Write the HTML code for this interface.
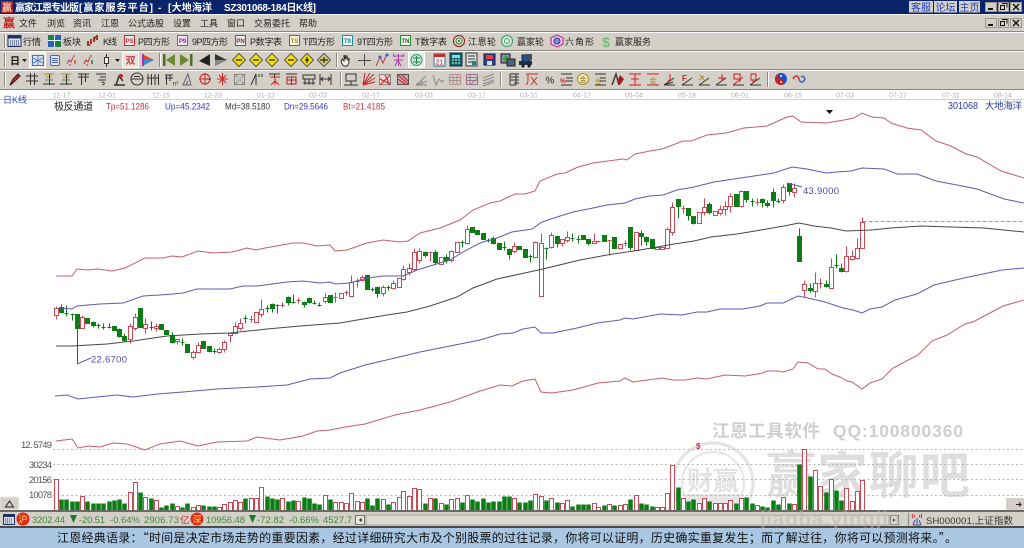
<!DOCTYPE html>
<html lang="zh"><head><meta charset="utf-8"><title>赢家江恩专业版</title>
<style>
html,body{margin:0;padding:0;background:#fff;overflow:hidden}
svg{display:block;filter:blur(.35px)}
text{font-family:"Liberation Sans","Noto Sans CJK SC",sans-serif}
.cn{font-family:"Liberation Sans","Noto Sans CJK SC",sans-serif;font-size:9px;fill:#222}
.d{font-size:7px;fill:#b0b0b0}
.q{font-size:9.5px;fill:#3c8c3c}
.i{font-size:9.5px}
.ln{fill:none;stroke-width:1}
.s{fill:none;stroke:#333;stroke-width:1}
.r{fill:none;stroke:#c22;stroke-width:1}
.y{fill:none;stroke:#a89020;stroke-width:1}
.g{fill:none;stroke:#888;stroke-width:1}
</style></head><body>
<svg xmlns="http://www.w3.org/2000/svg" width="1024" height="548" viewBox="0 0 1024 548">
<rect width="1024" height="548" fill="#fff"/>
<!-- title bar -->
<rect width="1024" height="14" fill="#0a246a"/>
<rect x="1" y="1" width="12" height="12" fill="#b02020"/>
<text x="2" y="11" font-size="10" fill="#f0d0c0" font-weight="bold">赢</text>
<g font-size="10" fill="#fff" font-weight="bold">
<text x="15" y="11" textLength="64">赢家江恩专业版</text>
<text x="79" y="11" textLength="74">[赢家服务平台]</text>
<text x="158" y="11">-</text>
<text x="168" y="11" textLength="44">[大地海洋</text>
<text x="224" y="11" textLength="92">SZ301068-184日K线]</text>
</g>
<g font-size="10" fill="#2040c0" text-anchor="middle">
<rect x="909" y="1" width="24" height="11.5" fill="#d4d0c8"/><text x="921" y="11">客服</text>
<rect x="934" y="1" width="23" height="11.5" fill="#d4d0c8"/><text x="945.5" y="11">论坛</text>
<rect x="959" y="1" width="21" height="11.5" fill="#d4d0c8"/><text x="969.5" y="11">主页</text>
</g>
<g id="wb">
<rect x="985.5" y="2.5" width="11" height="9" fill="#d4d0c8" stroke="#9a988f"/><rect x="988" y="8" width="5" height="2" fill="#111"/>
<rect x="998.5" y="2.5" width="10" height="9" fill="#d4d0c8" stroke="#9a988f"/><path d="M1002 3.5h5v4M1000.5 5.5h4v4h-4z" fill="none" stroke="#111"/>
<rect x="1010.5" y="2.5" width="11" height="9" fill="#d4d0c8" stroke="#9a988f"/><path d="M1013 4l6 6M1019 4l-6 6" stroke="#111" stroke-width="1.4"/>
</g>
<!-- bars -->
<rect y="14" width="1024" height="76" fill="#d4d0c8"/>
<path d="M0 14.5H1024" stroke="#f0eee8"/>
<g stroke="#8a8880"><path d="M0 31.5H1024M0 50.5H1024M0 69.5H1024M0 89.5H1024"/></g>
<g stroke="#fafafa"><path d="M0 32.5H1024M0 51.5H1024M0 70.5H1024"/></g>
<g stroke="#8a8880" fill="none"><path d="M4.5 34V48M4.5 53V67M4.5 72V87M159.5 53V67M336.5 53V67M340.5 72V87M500.5 72V87M767.5 72V87"/></g>
<g stroke="#fff"><path d="M5.5 34V48M5.5 53V67M5.5 72V87M160.5 53V67M337.5 53V67M341.5 72V87M501.5 72V87M768.5 72V87"/></g>
<use href="#wb" y="16"/>
<!-- menu -->
<text x="3" y="27" font-size="12" font-weight="bold" fill="#c01818">赢</text>
<g class="cn">
<text class="cn" x="19" y="26.5" textLength="18">文件</text>
<text class="cn" x="47" y="26.5" textLength="18">浏览</text>
<text class="cn" x="73" y="26.5" textLength="18">资讯</text>
<text class="cn" x="101" y="26.5" textLength="18">江恩</text>
<text class="cn" x="128" y="26.5" textLength="36">公式选股</text>
<text class="cn" x="173" y="26.5" textLength="18">设置</text>
<text class="cn" x="200" y="26.5" textLength="18">工具</text>
<text class="cn" x="227" y="26.5" textLength="18">窗口</text>
<text class="cn" x="254" y="26.5" textLength="36">交易委托</text>
<text class="cn" x="299" y="26.5" textLength="18">帮助</text>
<!-- row1 -->
<text class="cn" x="23" y="45" textLength="18">行情</text>
<text class="cn" x="63" y="45" textLength="18">板块</text>
<text class="cn" x="103" y="45" textLength="14">K线</text>
<text class="cn" x="138" y="45" textLength="32">P四方形</text>
<text class="cn" x="192" y="45" textLength="36">9P四方形</text>
<text class="cn" x="250" y="45" textLength="32">P数字表</text>
<text class="cn" x="303" y="45" textLength="32">T四方形</text>
<text class="cn" x="357" y="45" textLength="36">9T四方形</text>
<text class="cn" x="415" y="45" textLength="32">T数字表</text>
<text class="cn" x="468" y="45" textLength="28">江恩轮</text>
<text class="cn" x="517" y="45" textLength="27">赢家轮</text>
<text class="cn" x="565" y="45" textLength="29">六角形</text>
<text class="cn" x="615" y="45" textLength="36">赢家服务</text>
</g>
<!-- row1 icons -->
<rect x="8" y="35.5" width="13" height="11" fill="#d8e0f0" stroke="#203060"/><rect x="8" y="35.5" width="13" height="3" fill="#203060"/>
<path d="M10 41h10M10 43h10M10 45h10" stroke="#203060" stroke-dasharray="1 1"/>
<rect x="48" y="35" width="6" height="5" fill="#208040"/><rect x="55" y="35" width="6" height="5" fill="#3060b0"/><rect x="48" y="41" width="6" height="6" fill="#3060b0"/><rect x="55" y="41" width="6" height="6" fill="#208040"/><path d="M54.5 35V47M48 40.5H61" stroke="#dff"/>
<path d="M88 41v5M91 39v5M94 37v5M97 35v5" stroke="#c22" stroke-width="2"/><path d="M89.5 44v2M95.500 36v3" stroke="#282" stroke-width="1.500"/>
<g font-size="6" font-weight="bold" text-anchor="middle">
<rect x="124.500" y="35.500" width="10" height="10" fill="#eee" stroke="#c03030"/><text x="129.500" y="43" fill="#c03030">PS</text>
<rect x="177.500" y="35.500" width="10" height="10" fill="#f4e8f8" stroke="#c030c0"/><text x="182.500" y="43" fill="#a020a0">P9</text>
<rect x="235.500" y="35.500" width="10" height="10" fill="#eee" stroke="#c03030"/><text x="240.500" y="43" fill="#803040">PN</text>
<rect x="289.500" y="35.500" width="10" height="10" fill="#eef8e8" stroke="#209030"/><text x="294.500" y="43" fill="#c08020">TS</text>
<rect x="342.500" y="35.500" width="10" height="10" fill="#e8f8f8" stroke="#209090"/><text x="347.500" y="43" fill="#2080a0">T9</text>
<rect x="400.500" y="35.500" width="10" height="10" fill="#eef8e8" stroke="#209030"/><text x="405.500" y="43" fill="#405030">TN</text>
</g>
<circle cx="459" cy="41" r="5.500" fill="#d8e8d0" stroke="#a02820" stroke-width="1.200"/><circle cx="459" cy="41" r="3" fill="none" stroke="#208040"/><circle cx="459" cy="41" r="1" fill="#a02820"/>
<circle cx="507" cy="41" r="5.500" fill="#dff0e0" stroke="#40a070" stroke-width="1.200"/><circle cx="507" cy="41" r="2.500" fill="none" stroke="#40a070"/>
<polygon points="557,35 563,38 563,44 557,47 551,44 551,38" fill="#e8d0f0" stroke="#c03080" stroke-width="1.200"/><circle cx="557" cy="41" r="3" fill="#8090d0" stroke="#303090"/>
<text x="606" y="47" font-size="14" font-weight="bold" fill="#70c070" text-anchor="middle">$</text>
<!-- row2 -->
<text x="10" y="64.500" font-size="10" font-weight="bold" fill="#111">日</text>
<path d="M22 59l2.500 3 2.500-3z" fill="#222"/>
<rect x="29.500" y="52.500" width="16" height="15" fill="#e8e6e0" stroke="#fff"/>
<rect x="32.500" y="55.500" width="11" height="10" fill="#dce4f4" stroke="#5070c0"/><path d="M33 58l10 5M33 63l10-5M38 55v10" stroke="#6080c8" fill="none"/>
<rect x="50.500" y="55.500" width="9" height="10" rx="1.500" fill="#e4e8f8" stroke="#4860c0"/><path d="M52 58.500h6M52 60.500h6M52 62.500h6" stroke="#4860c0"/>
<path d="M67 64l2-4 2 2 2-5M70 64v2M74 57v-2" fill="none" stroke="#c03070"/><path d="M75 60v4" stroke="#c06020" stroke-width="1.500"/>
<path d="M84 64l2-4 2 2 2-5M87 64v2M91 57v-2" fill="none" stroke="#b03030"/><path d="M92 60v4" stroke="#208040" stroke-width="1.500"/>
<rect x="104.500" y="57.500" width="4" height="6" fill="#fff" stroke="#333"/><path d="M106.500 54v3M106.500 64v3" stroke="#333"/>
<path d="M115 59l2.500 3 2.500-3z" fill="#222"/>
<rect x="122.500" y="52.500" width="16" height="15" fill="#e6e4de" stroke="#fff"/>
<text x="130.500" y="64" font-size="10" fill="#d04040" font-weight="bold" text-anchor="middle">双</text>
<polygon points="142,54 154,60 142,66" fill="#e84040"/><polygon points="142,60 154,60 142,66" fill="#3090d0"/><rect x="142" y="54" width="2" height="12" fill="#b030b0"/>
<rect x="163" y="54" width="2.500" height="12" fill="#506a20"/><polygon points="175,54 175,66 166,60" fill="#6a8a30"/>
<polygon points="180,54 180,66 189,60" fill="#6a8a30"/><rect x="190" y="54" width="2.500" height="12" fill="#506a20"/>
<polygon points="210,54 210,66 199,61" fill="#222"/><polygon points="215,54 215,66 227,60" fill="#333"/><polygon points="215,60 215,66 227,60" fill="#888"/>
<g fill="#f4e000" stroke="#555">
<polygon points="239,53.500 245.500,60 239,66.500 232.500,60"/><polygon points="256,53.500 262.500,60 256,66.500 249.500,60"/><polygon points="272,53.500 278.500,60 272,66.500 265.500,60"/><polygon points="291,53.500 297.500,60 291,66.500 284.500,60"/><polygon points="307,53.500 313.500,60 307,66.500 300.500,60"/><polygon points="324,53.500 330.500,60 324,66.500 317.500,60" fill="#d8d070"/>
</g>
<path d="M236 60h6M253 60h6M269 60h6M288 60h6M305 60h4M320 60h8M307 57v6M324 57v6" stroke="#222" stroke-width="1.200"/>
<path d="M344 66c-3-2-3-6-2-7l2 2v-6l1 4v-4l1 4 1-3 1 4 1-2v4c0 2-1 3-2 4z" fill="#f4f2ea" stroke="#333"/>
<path d="M364.500 54v12M358 60.500h13" stroke="#444"/>
<path d="M376 66l4-9 3 6 4-9" fill="none" stroke="#c03040"/><circle cx="380" cy="57" r="1.500" fill="#3060d0"/><circle cx="387" cy="55" r="1.500" fill="#3060d0"/>
<path d="M393 56h11M398.500 54v12M394 60h9M395 66l3-6 3 6M393 54l2 3M404 54l-2 3" fill="none" stroke="#b040b0"/>
<rect x="408.500" y="52.500" width="16" height="15" fill="#e0ece8" stroke="#fff"/><circle cx="416.500" cy="60" r="5.500" fill="#c8e4d0" stroke="#30a070"/><path d="M413 58h7M413 62h7M416.500 56v8" stroke="#208050"/>
<rect x="434" y="54" width="11" height="12" fill="#f0f0f0" stroke="#3070a0"/><rect x="434" y="54" width="11" height="3" fill="#c03030"/><text x="439.500" y="64.500" font-size="7" fill="#b03030" text-anchor="middle">21</text>
<rect x="450" y="53" width="12" height="13" fill="#106070" stroke="#103040"/><rect x="452" y="55" width="8" height="3" fill="#80e0d0"/><path d="M452 60h2M455 60h2M458 60h2M452 63h2M455 63h2M458 63h2" stroke="#cfc"/>
<rect x="466" y="53" width="11" height="13" fill="#e0e0d8" stroke="#303840"/><path d="M468 56h7M468 59h7M468 62h4" stroke="#303840"/><rect x="472" y="61" width="4" height="4" fill="#208080"/>
<rect x="484" y="54" width="11" height="11" fill="#2040a0" stroke="#102040"/><rect x="486" y="55" width="7" height="4" fill="#e84040"/><rect x="487" y="61" width="5" height="4" fill="#ddd"/>
<rect x="501" y="54" width="9" height="9" fill="#70a0a0" stroke="#303"/><circle cx="506" cy="59" r="3" fill="#40a040"/><rect x="507" y="59" width="8" height="7" fill="#506080" stroke="#222"/>
<rect x="522" y="55" width="8" height="9" fill="#2050a0" stroke="#123"/><rect x="525" y="54" width="7" height="6" fill="#405060"/><rect x="519" y="61" width="13" height="4" fill="#203040"/><circle cx="523" cy="66" r="1.500" fill="#111"/><circle cx="529" cy="66" r="1.500" fill="#111"/>
<!-- row3 -->
<path d="M10 85l3-6 5-5 2 2-5 5z" fill="#c22" stroke="#222"/><path d="M10 85l3-2" stroke="#222"/>
<path class="s" d="M26 76h12M26 81h12M30.500 73v12M34.500 73v12"/>
<path class="y" d="M44 74h10M46 77h6"/><path class="s" d="M43 84h12M49.500 74v11"/><path d="M45 80h8" stroke="#3a8a3a"/>
<path class="y" d="M61 74h10M63 77h6"/><path class="s" d="M60 84h12M66.500 74v11"/><path d="M62 80h8" stroke="#3a8a3a"/>
<path class="s" d="M78 74h11M78 77h11M81.500 74v11M85.500 74v8"/>
<path class="s" d="M96 74h10M100 77h6M98 80h8M101.500 82c3 0 4 2 1 3"/>
<path d="M114 85h11M116 85l3-9 4 5" fill="none" stroke="#333" stroke-width="1.500"/><circle cx="121" cy="76" r="2" fill="#c22"/>
<circle cx="137" cy="79" r="6" class="s"/><path class="s" d="M131 79h12M134 76.500h6"/>
<path class="s" d="M148 74v11M151.500 74v11M155 74v11M158.500 74v11M147 78h12"/>
<path class="s" d="M165 75h8M165 78h8M166.500 75v10M170 75v6"/><text x="173" y="85.500" font-size="6" fill="#333">n²</text>
<path d="M183 85l5-11 3 11zM186 85l2-4" fill="none" stroke="#667"/>
<circle cx="205" cy="79" r="5" class="r"/><path class="r" d="M199 79h12M205 73v12"/><path class="s" d="M207 79h4"/>
<path class="r" d="M217 79h11M222.500 73v12M219 75l7 8M226 75l-7 8"/>
<rect x="234.500" y="74.500" width="10" height="10" fill="none" stroke="#888"/><path class="g" d="M234 74l11 11M245 74l-11 11"/><rect x="237" y="77" width="5" height="5" fill="#bbb"/>
<path class="s" d="M251 85l5-11v11M259 74v3M262 74v3"/>
<path class="s" d="M269 74h11M274.500 74v4"/><path class="r" d="M270 77h10M275 78v7M271 85l4-4 4 4"/>
<path class="s" d="M286 74h11"/><path d="M287 77h9v7h-9zM287 80h9M291.500 77v8" fill="none" stroke="#b02020"/>
<path class="s" d="M303 75h12v4h-12zM305 79v6M309 79v6M313 79v6M303 83h12"/>
<path class="s" d="M320 74v11M331 74v11M320 79h11M323 77l-2 2 2 2M328 77l2 2-2 2"/>
<path class="s" d="M346 74h10v7h-10zM351 81v4M344 85h14"/>
<path class="r" d="M363 85l11-11M363 85l12-7M363 85l12-3M363 85l7-12M363 85l2-12"/>
<rect x="379.500" y="74.500" width="11" height="10" fill="#e8d8d0" stroke="#888"/><path class="r" d="M380 85l10-10M380 79l10 5M385 75l5 10"/>
<rect x="397.500" y="74.500" width="11" height="10" fill="#c8a8b0" stroke="#555"/><path class="r" d="M398 75l10 9M398 79l8 6M402 75l6 6"/>
<path class="g" d="M416 85h11M416 85l10-9M416 85l11-4"/><path d="M421 85l1-4" stroke="#888"/>
<path class="g" d="M433 75l3 10 3-6 3 3 2-2"/>
<rect x="449.500" y="74.500" width="11" height="10" fill="none" stroke="#c09090"/><path d="M449 77.500h12M449 80.500h12M453 74v11M457 74v11" stroke="#a09090"/>
<rect x="466.500" y="74.500" width="11" height="10" fill="none" stroke="#a07090"/><path d="M466 77.500h12M466 80.500h12M470 74v11" stroke="#a07090"/><path class="g" d="M471 84l7-6"/>
<path class="g" d="M483 78l11-4M483 81l11-4M483 84l11-4M483 86l11-4"/>
<path class="s" d="M510 74v11M510 74h6M510 77h6M510 80h6M510 85h6"/>
<path class="s" d="M519 74h-5M519 77h-5M519 80h-5M519 83h-5M516 74v11"/>
<path d="M526 74h12M528 74v6c0 2-1 4-2 5M531 77l6 8M537 77l-6 8" fill="none" stroke="#c23030"/>
<text x="550" y="83.500" font-size="10" fill="#555" font-weight="bold" text-anchor="middle">%</text>
<path class="s" d="M561 74h11M561 85h11M566 78h7M566 81h7"/><text x="560" y="83" font-size="6.500" fill="#c22" font-weight="bold">%</text>
<circle cx="583" cy="79" r="5.500" fill="#f0e8c0" stroke="#a89020"/><text x="583" y="82" font-size="7" fill="#907020" text-anchor="middle">金</text>
<path class="s" d="M595 74h11M595 85h11M600 78h6M600 81h6"/><text x="595" y="83.500" font-size="6.500" fill="#a89020">金</text>
<path d="M612 85l4-11 3 11" fill="none" stroke="#333" stroke-width="1.400"/><path d="M620 75l4 4-4 6-3-3z" fill="#a02020"/>
<path class="r" d="M629 85h12M629 74h12M631 79h8M635 74v11"/>
<path class="r" d="M647 85h12M647 74h12"/><text x="653" y="83.500" font-size="7.500" fill="#a89020" text-anchor="middle">金</text>
<path class="s" d="M664 85h11M664 85l10-7M664 85l9-3"/><path class="r" d="M670 74v6l-2 1"/>
<path class="s" d="M682 85h11M682 85l10-7"/><text x="682" y="81" font-size="8" fill="#c22" font-weight="bold">F</text>
<path class="s" d="M699 85h11M699 85l10-7"/><path class="y" d="M700 75l5 6M699 80l5-4"/>
<path class="s" d="M716 85h11M716 85l10-7"/><path class="r" d="M722 74v7M718 78h7"/>
<path class="s" d="M733 85h11"/><path class="r" d="M733 85l10-8M734 74h6v5h-6zM740 82v-4"/>
<path class="s" d="M750 85h11M750 85l10-7"/><path class="r" d="M751 74h5v6h-5zM753 80v3"/>
<circle cx="781" cy="79" r="6" fill="#2050c0"/><path d="M781 73a6 6 0 0 0 0 12a3 3 0 0 0 0-6a3 3 0 0 1 0-6z" fill="#d02020"/><circle cx="781" cy="76" r="1" fill="#fff"/><circle cx="781" cy="82" r="1" fill="#fff"/>
<path d="M793 79c2-4 5-4 6 0" fill="none" stroke="#d03030" stroke-width="1.600"/><path d="M799 79c1 4 4 4 6 0c-1-3-3-3-4-2" fill="none" stroke="#4070c0" stroke-width="1.600"/>
<!-- x axis -->
<rect y="90" width="1024" height="9" fill="#fff"/>
<path d="M0 99.500H1024" stroke="#d0d0d0"/>
<g class="d">
<text class="d" x="53" y="97.500">11-17</text><text class="d" x="98" y="97.500">12-01</text><text class="d" x="152" y="97.500">12-15</text><text class="d" x="204" y="97.500">12-29</text><text class="d" x="257" y="97.500">01-13</text><text class="d" x="309" y="97.500">02-03</text><text class="d" x="362" y="97.500">02-17</text><text class="d" x="415" y="97.500">03-03</text><text class="d" x="468" y="97.500">03-17</text><text class="d" x="520" y="97.500">03-31</text><text class="d" x="573" y="97.500">04-17</text><text class="d" x="625" y="97.500">05-04</text><text class="d" x="678" y="97.500">05-18</text><text class="d" x="731" y="97.500">06-01</text><text class="d" x="784" y="97.500">06-15</text><text class="d" x="836" y="97.500">07-03</text><text class="d" x="889" y="97.500">07-17</text><text class="d" x="942" y="97.500">07-31</text><text class="d" x="994" y="97.500">08-14</text>
</g>
<text x="3" y="103" font-size="9" fill="#3050b8" textLength="24">日K线</text>
<text x="54" y="110" font-size="10" fill="#222" textLength="39">极反通道</text>
<text class="i" x="106" y="109.500" fill="#d03040" textLength="43" lengthAdjust="spacingAndGlyphs">Tp=51.1286</text>
<text class="i" x="165" y="109.500" fill="#3838c0" textLength="45" lengthAdjust="spacingAndGlyphs">Up=45.2342</text>
<text class="i" x="225" y="109.500" fill="#333" textLength="45" lengthAdjust="spacingAndGlyphs">Md=38.5180</text>
<text class="i" x="284" y="109.500" fill="#3838c0" textLength="44" lengthAdjust="spacingAndGlyphs">Dn=29.5646</text>
<text class="i" x="343" y="109.500" fill="#d03040" textLength="42" lengthAdjust="spacingAndGlyphs">Bt=21.4185</text>
<text x="948" y="109" font-size="10" fill="#2a3a9a" textLength="30" lengthAdjust="spacingAndGlyphs">301068</text>
<text x="985" y="109" font-size="9.500" fill="#2a3a9a" textLength="37">大地海洋</text>
<path d="M826 110h7l-3.500 4z" fill="#111"/>
<!-- watermark -->
<g>
<circle cx="713" cy="483" r="40" fill="none" stroke="#e4e4e4" stroke-width="3"/>
<circle cx="713" cy="483" r="31" fill="none" stroke="#e6e6e6" stroke-width="2"/>
<text x="687" y="490" font-size="26" font-weight="bold" fill="#e2e2e2">财赢</text>
<rect x="686" y="494" width="54" height="12" fill="#e6e6e6"/>
<text x="712" y="437" font-size="17.500" font-weight="bold" fill="#cfcfcf" textLength="108">江恩工具软件</text>
<text x="833" y="437" font-size="17.500" font-weight="bold" fill="#cfcfcf" textLength="130">QQ:100800360</text>
<text x="766" y="493" font-size="50" font-weight="bold" fill="#dedede" textLength="204">赢家聊吧</text>
</g>
<!-- grid -->
<g stroke="#b8b8b8" stroke-dasharray="2 2.500"><path d="M53 449.500H1024M53 464.500H1024M53 479.500H1024M53 495.500H1024"/></g>
<g font-size="9.500" fill="#555">
<text x="21" y="448" textLength="31">12.&#160;5749</text><text x="29" y="468" textLength="23">30234</text><text x="29" y="483" textLength="23">20156</text><text x="29" y="498" textLength="23">10078</text>
</g>
<text x="696" y="449" font-size="8" fill="#d03040" font-weight="bold">$</text>
<g transform="translate(.5 .5)">
<!-- candles -->
<path d="M862 221H1024" stroke="#a09898" stroke-dasharray="4 2"/>
<path fill="none" stroke="#cc4a58" d="M56 306V319M82 315V320M130 323V343M135 313V330M145 318V333M156 323V331M177 339V344M193 350V359M198 342V353M219 347V353M224 340V352M230 332V342M235 322V334M240 318V330M249 319h4M251 315V322M261 299V317M282 302V307M280 305h4M298 297V303M296 300h4M325 293V303M335 292V302M333 297h4M346 290V295M344 292h4M351 275V296M357 278V287M355 281h4M362 275V281M383 285V296M393 280V289M403 265V280M409 263V275M414 248V270M419 248V263M430 251V261M428 252h4M451 250V262M467 225V244M514 242V253M535 241V257M541 233V250M551 232V248M562 239V246M567 231V242M594 233V243M598 240V242M596 241h4M609 240V255M607 240h4M625 240V246M623 243h4M667 227V248M672 202V235M683 205V213M681 208h4M704 198V215M720 205V215M725 201V215M730 193V212M741 190V207M757 198V205M755 202h4M783 184V203M794 183V197M804 280V297M815 272V297M820 278V288M818 283h4M831 258V267M846 246V272M852 250V260M857 238V259M862 217V222"/>
<path fill="#fff" stroke="#cc4a58" d="M54 308h4v7h-4zM80 317h4v11h-4zM128 326h4v13h-4zM133 317h4v11h-4zM143 324h4v4h-4zM154 326h4v2h-4zM175 339h4v2h-4zM191 352h4v5h-4zM196 345h4v7h-4zM217 349h4v3h-4zM222 342h4v7h-4zM228 333h4v2h-4zM233 326h4v7h-4zM238 323h4v5h-4zM254 312h4v10h-4zM259 309h4v5h-4zM323 297h4v4h-4zM339 293h4v5h-4zM349 282h4v14h-4zM360 277h4v3h-4zM381 287h4v6h-4zM391 283h4v5h-4zM397 278h4v9h-4zM401 269h4v10h-4zM407 268h4v4h-4zM412 252h4v17h-4zM417 251h4v9h-4zM439 257h4v7h-4zM449 251h4v9h-4zM455 242h4v10h-4zM465 229h4v14h-4zM512 246h4v5h-4zM533 242h4v15h-4zM539 243h4v53h-4zM549 235h4v12h-4zM560 239h4v4h-4zM565 237h4v3h-4zM592 241h4v2h-4zM618 244h4v4h-4zM634 232h4v18h-4zM655 247h4v2h-4zM660 247h4v2h-4zM665 229h4v19h-4zM670 207h4v25h-4zM697 212h4v11h-4zM702 207h4v5h-4zM713 211h4v4h-4zM718 209h4v4h-4zM723 206h4v3h-4zM728 196h4v10h-4zM739 191h4v15h-4zM781 187h4v13h-4zM792 188h4v4h-4zM802 284h4v6h-4zM813 283h4v8h-4zM829 267h4v21h-4zM844 256h4v15h-4zM850 256h4v3h-4zM855 248h4v10h-4zM860 222h4v26h-4z"/>
<path fill="#0c7c14" stroke="#0c7c14" d="M61 304V313M59 307h4v5h-4zM66 305V316M64 313h4M72 313V320M70 314h4M77 314V363M75 314h4v14h-4zM85 318h4v5h-4zM93 321V327M91 322h4v3h-4zM98 323V328M96 325h4M103 323V329M101 327h4M109 323V328M107 327h4M112 326h4v4h-4zM119 328V337M117 329h4v7h-4zM124 333V341M122 336h4v4h-4zM138 308h4v19h-4zM151 321V330M149 327h4M159 324h4v5h-4zM164 330h4v4h-4zM172 332V343M170 335h4v7h-4zM182 338V345M180 342h4M185 344h4v8h-4zM201 341h4v7h-4zM207 346h4v5h-4zM214 348V353M212 351h4M245 315V323M243 318h4M267 305V312M265 308h4M272 303V312M270 304h4v4h-4zM277 304V313M275 305h4M288 296V305M286 297h4v5h-4zM293 294V303M291 302h4M304 301V307M302 302h4v2h-4zM309 297V303M307 298h4v4h-4zM314 300V304M312 303h4M319 302V306M317 305h4M328 295h4v7h-4zM365 275h4v14h-4zM372 287V291M370 289h4M377 286V297M375 287h4v6h-4zM388 285V290M386 287h4M425 251V257M423 252h4v3h-4zM435 250V264M433 252h4v10h-4zM446 254V263M444 257h4v3h-4zM462 240V247M460 242h4M470 227h4v5h-4zM475 230h4v4h-4zM481 233h4v6h-4zM488 238V242M486 240h4M493 236V244M491 238h4v5h-4zM497 243h4v6h-4zM504 241V250M502 247h4M509 248V259M507 249h4v5h-4zM517 246h4v3h-4zM523 249h4v8h-4zM530 254V262M528 256h4M546 247V259M544 248h4M557 235V247M555 236h4v7h-4zM572 233V241M570 238h4M578 235V243M576 239h4M581 235h4v4h-4zM588 239V245M586 239h4v4h-4zM602 235h4v6h-4zM612 237h4v11h-4zM630 227V250M628 227h4v20h-4zM641 230V245M639 233h4v3h-4zM646 236V245M644 237h4v4h-4zM650 239h4v9h-4zM678 199V218M676 199h4v7h-4zM688 208V220M686 208h4v7h-4zM693 216V224M691 216h4v7h-4zM709 202V214M707 204h4v8h-4zM734 194h4v12h-4zM746 191V202M744 191h4v8h-4zM752 198V206M750 201h4M762 198V207M760 199h4v3h-4zM767 200V207M765 203h4v2h-4zM773 188V207M771 192h4v8h-4zM778 198V203M776 201h4M789 183V195M787 183h4v8h-4zM799 228V261M797 236h4v25h-4zM810 283V292M808 288h4v2h-4zM826 280V287M824 284h4v2h-4zM836 254V268M834 265h4M841 263V272M839 268h4v3h-4z"/>
<!-- volume red -->
<path fill="#fff" stroke="#cc4a58" d="M54 479h4V510h-4zM80 496h4V510h-4zM128 492h4V510h-4zM133 482h4V510h-4zM143 497h4V510h-4zM154 500h4V510h-4zM175 506h4V510h-4zM191 507h4V510h-4zM196 505h4V510h-4zM217 507h4V510h-4zM222 504h4V510h-4zM228 502h4V510h-4zM233 500h4V510h-4zM238 502h4V510h-4zM249 498h4V510h-4zM254 498h4V510h-4zM259 487h4V510h-4zM280 498h4V510h-4zM296 501h4V510h-4zM323 495h4V510h-4zM333 502h4V510h-4zM339 502h4V510h-4zM344 503h4V510h-4zM349 493h4V510h-4zM355 501h4V510h-4zM360 502h4V510h-4zM381 499h4V510h-4zM391 502h4V510h-4zM397 497h4V510h-4zM401 491h4V510h-4zM407 496h4V510h-4zM412 488h4V510h-4zM417 489h4V510h-4zM428 498h4V510h-4zM439 503h4V510h-4zM449 499h4V510h-4zM455 498h4V510h-4zM465 495h4V510h-4zM512 498h4V510h-4zM533 494h4V510h-4zM539 496h4V510h-4zM549 498h4V510h-4zM560 503h4V510h-4zM565 500h4V510h-4zM592 503h4V510h-4zM596 507h4V510h-4zM607 504h4V510h-4zM618 505h4V510h-4zM623 504h4V510h-4zM634 495h4V510h-4zM655 507h4V510h-4zM660 507h4V510h-4zM665 493h4V510h-4zM670 465h4V510h-4zM681 498h4V510h-4zM697 503h4V510h-4zM702 498h4V510h-4zM713 503h4V510h-4zM718 503h4V510h-4zM723 503h4V510h-4zM728 500h4V510h-4zM739 498h4V510h-4zM755 505h4V510h-4zM781 497h4V510h-4zM792 504h4V510h-4zM802 449h4V510h-4zM813 470h4V510h-4zM818 486h4V510h-4zM829 479h4V510h-4zM844 488h4V510h-4zM850 501h4V510h-4zM855 491h4V510h-4zM860 480h4V510h-4z"/>
<path fill="none" stroke="#0c7c14" stroke-width="4.500" d="M61 499V510M66 499V510M72 501V510M77 501V510M87 501V510M93 503V510M98 503V510M103 503V510M109 501V510M114 500V510M119 499V510M124 503V510M140 492V510M151 498V510M161 507V510M166 505V510M172 503V510M182 507V510M187 503V510M203 505V510M209 506V510M214 506V510M245 498V510M267 496V510M272 498V510M277 499V510M288 501V510M293 500V510M304 497V510M309 498V510M314 503V510M319 504V510M330 499V510M367 498V510M372 505V510M377 498V510M388 504V510M425 503V510M435 498V510M446 504V510M462 502V510M472 499V510M477 501V510M483 498V510M488 502V510M493 501V510M499 501V510M504 496V510M509 496V510M519 502V510M525 502V510M530 500V510M546 500V510M557 502V510M572 506V510M578 504V510M583 504V510M588 504V510M604 505V510M614 505V510M630 499V510M641 503V510M646 504V510M652 506V510M678 487V510M688 501V510M693 499V510M709 501V510M736 503V510M746 497V510M752 503V510M762 506V510M767 507V510M773 500V510M778 504V510M789 503V510M799 464V510M810 476V510M826 492V510M836 490V510M841 500V510"/>
</g>
<!-- lines -->
<polyline class="ln" stroke="#c4606a" points="56,276 65,276 72,276 77,269 88,270 98,269 112,271 125,268 145,258 163,258 172,256 182,257 198,251 213,253 232,252 247,248 256,250 265,248 282,245 293,243 303,243 317,246 330,245 335,251 347,250 367,243 383,240 400,242 408,241 420,233 440,228 460,220 473,210 490,203 500,201 515,194 525,194 535,191 540,181 557,174 565,173 578,167 593,163 623,159 627,160 635,154 650,151 662,149 670,146 683,141 691,141 707,135 726,133 744,128 767,126 787,117 793,116 801,122 826,123 844,120 854,118 862,113 872,117 884,118 891,123 907,128 921,130 936,141 951,146 966,154 977,157 1001,171 1024,178"/>
<polyline class="ln" stroke="#5c5cb4" points="60,308 72,309 77,306 88,305 100,304 123,303 143,296 160,295 173,294 183,293 197,289 210,289 230,289 243,286 257,286 287,282 303,281 320,283 330,282 335,284 350,283 367,278 383,276 403,276 417,270 440,263 450,260 463,252 480,243 497,238 512,232 532,229 542,222 557,217 573,212 593,208 607,205 625,203 635,199 650,196 663,195 677,190 694,187 714,182 734,179 754,176 774,173 792,167 807,169 826,173 837,172 851,171 862,168 884,169 897,174 917,174 936,181 957,185 977,189 1004,199 1024,203"/>
<polyline class="ln" stroke="#484848" points="56,346 72,346 107,344 133,341 167,336 200,334 230,333 267,329 300,326 340,323 363,319 387,315 407,312 430,306 457,297 473,288 497,279 520,274 543,269 580,260 607,255 640,250 674,244 694,241 711,237 737,234 761,230 784,226 799,223 814,226 831,228 846,231 871,230 891,228 921,226 951,227 984,228 1024,232"/>
<polyline class="ln" stroke="#5c5cb4" points="55,396 67,395 78,399 97,397 117,395 133,397 157,394 183,392 217,389 257,387 287,385 310,379 330,378 340,373 365,365 395,358 420,352 450,346 480,340 500,334 513,333 523,329 535,327 541,333 553,333 577,328 597,323 620,320 625,318 633,319 660,314 682,315 697,312 707,312 720,309 743,309 760,306 767,303 783,303 798,296 808,298 825,302 843,308 853,310 862,313 870,309 882,307 895,300 917,294 934,285 964,278 1002,270 1024,268"/>
<polyline class="ln" stroke="#c4606a" points="56,441 72,439 78,448 88,446 100,447 113,443 127,444 145,450 160,444 180,441 198,446 217,442 247,441 257,437 280,440 303,436 317,431 330,430 345,427 365,424 395,415 420,410 450,402 480,391 500,385 512,386 523,381 535,379 541,392 552,393 573,390 598,383 620,381 625,378 633,382 662,378 673,380 685,380 697,378 707,379 725,375 745,376 763,373 767,371 777,371 783,372 793,369 798,362 808,363 818,369 825,369 832,374 840,377 847,381 852,382 862,389 870,383 882,379 893,368 918,355 932,341 947,335 965,324 973,322 1003,306 1024,300"/>
<path d="M77 364L91 358M787 183L802 187" fill="none" stroke="#5c5cb4"/>
<text x="91" y="362.500" font-size="9.500" fill="#4a4aa8" textLength="36">22.6700</text>
<text x="803" y="194" font-size="9.500" fill="#4a4aa8" textLength="36">43.9000</text>
<!-- triangle button -->
<rect x="0" y="497" width="19" height="13" fill="#d4d0c8" stroke="#eee"/>
<path d="M5.500 507l4-6 4 6z" fill="none" stroke="#222"/>
<rect x="1006" y="498" width="18" height="12" fill="#d4d0c8"/><path d="M1016 504.500h5M1019 502.500l2 2-2 2" fill="none" stroke="#222"/>
<!-- status bar -->
<rect y="510" width="1024" height="18" fill="#d4d0c8"/>
<path d="M0 511H1024" stroke="#6a6a66" stroke-width="2"/>
<path d="M0 527H1024" stroke="#4a4a48" stroke-width="2"/>
<rect x="3.500" y="514.500" width="11" height="10" fill="#d8e0f0" stroke="#203060"/><rect x="3.500" y="514.500" width="11" height="2.500" fill="#203060"/><path d="M5 519h8M5 521h8M5 523h8" stroke="#203060" stroke-dasharray="1 1"/>
<circle cx="23" cy="519" r="6.500" fill="#e02818"/><text x="23" y="522.500" font-size="9" fill="#ffe060" text-anchor="middle">沪</text>
<text class="q" x="32" y="523" textLength="33">3202.44</text>
<path d="M70 515h7l-3.500 8z" fill="#1a7a2a"/>
<text class="q" x="79" y="523" textLength="26">-20.51</text>
<text class="q" x="110" y="523" textLength="30">-0.64%</text>
<text class="q" x="144" y="523" textLength="35">2906.73</text>
<text x="180" y="523.500" font-size="9.500" fill="#c03030">亿</text>
<circle cx="197" cy="519" r="6.500" fill="#e02818"/><text x="197" y="522.500" font-size="9" fill="#ffe060" text-anchor="middle">深</text>
<text class="q" x="206" y="523" textLength="39">10956.48</text>
<path d="M249 515h7l-3.500 8z" fill="#1a7a2a"/>
<text class="q" x="257" y="523" textLength="27">-72.82</text>
<text class="q" x="289" y="523" textLength="30">-0.66%</text>
<text class="q" x="323" y="523" textLength="29">4527.7</text>
<rect x="355.500" y="515.500" width="9" height="9" fill="#e6e3dc" stroke="#777"/><path d="M361.500 518v4l-2.500-2z" fill="#111"/>
<rect x="366" y="515" width="523" height="10" fill="#dedad2" stroke="#aaa69e"/>
<rect x="890.500" y="515.500" width="8" height="9" fill="#e6e3dc" stroke="#777"/><path d="M893 518v4l2.500-2z" fill="#111"/>
<path d="M908.500 513V526" stroke="#888"/>
<text x="760" y="526" font-size="21" font-weight="bold" fill="#b8b6b0" textLength="140" opacity=".55">jiaoba.yingjia</text>
<path d="M917 518v6M913 525h8M915 520l-2 5M919 520l2 5" stroke="#3050a0" fill="none"/><path d="M913 514c-1 1-1 3 0 4M921 514c1 1 1 3 0 4M915 515c-1 1-1 2 0 2M919 515c1 1 1 2 0 2" stroke="#d03030" fill="none"/>
<text x="926" y="524" font-size="9.500" fill="#333" textLength="87">SH000001,上证指数</text>
<!-- quote bar -->
<rect y="528" width="1024" height="20" fill="#a9c6e2"/>
<text x="57" y="542" font-size="12" fill="#111" style="font-family:'Noto Sans CJK SC','Liberation Sans',sans-serif" textLength="900">江恩经典语录：“时间是决定市场走势的重要因素，经过详细研究大市及个别股票的过往记录，你将可以证明，历史确实重复发生；而了解过往，你将可以预测将来。”。</text>
</svg>
</body></html>
